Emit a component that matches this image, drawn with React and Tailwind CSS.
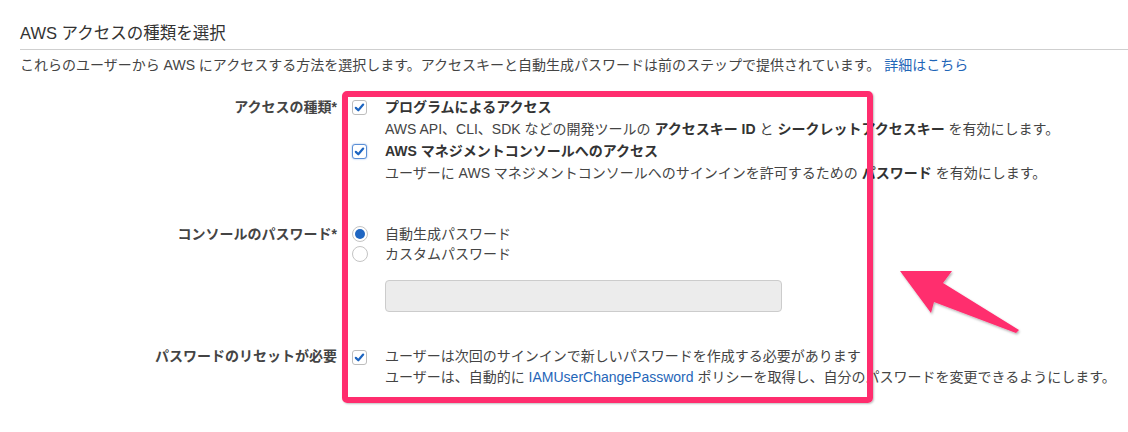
import React from 'react';

// ── Small form controls ──────────────────────────────
const Checkbox = ({ focused = false }) => (
  <span
    className={`mt-[4px] w-[15px] h-[15px] flex items-center justify-center rounded-[3px] bg-white border
                ${focused ? 'border-[#5b8fd6] shadow-[0_0_2px_#8fb4e8]' : 'border-[#bdbdbd]'}`}
  >
    <svg viewBox="0 0 12 12" className="w-[11px] h-[11px]">
      <path d="M2 6.4 L4.7 9 L10 2.8" fill="none" stroke="#1c64c0" strokeWidth="2.4" strokeLinecap="round" strokeLinejoin="round" />
    </svg>
  </span>
);

const Radio = ({ checked = false }) => (
  <span className="mt-[2px] w-[16px] h-[16px] rounded-full border border-[#c4c4c4] bg-white flex items-center justify-center">
    {checked && <span className="w-[10px] h-[10px] rounded-full bg-[#1f66c2]" />}
  </span>
);

const Label = ({ children }) => (
  <div className="w-[338px] shrink-0 text-right font-bold text-[#444] pr-[1px]">{children}</div>
);

export default function App() {
  return (
    <div className="relative w-[1128px] h-[432px] bg-white overflow-hidden text-[14px] text-[#444]
                    font-['Liberation_Sans','Noto_Sans_CJK_JP',sans-serif]">

      {/* ── Heading ─────────────────────────────────── */}
      <div className="pl-[20px] pt-[21px]">
        <h2 className="h-[24px] leading-[24px] text-[16.5px] text-[#333]">AWS アクセスの種類を選択</h2>
        <div className="mt-[4px] border-t border-[#cfcfcf]" />
        <p className="mt-[5px] leading-[20px]">
          これらのユーザーから AWS にアクセスする方法を選択します。アクセスキーと自動生成パスワードは前のステップで提供されています。
          <span className="ml-[4px] text-[#1f66b8]">詳細はこちら</span>
        </p>
      </div>

      {/* ── Access type ─────────────────────────────── */}
      <div className="mt-[21px] flex leading-[22px]">
        <Label>アクセスの種類*</Label>
        <div className="ml-[14px] flex flex-col">
          <div className="flex">
            <Checkbox />
            <div className="ml-[18px]">
              <div className="font-bold text-[#333]">プログラムによるアクセス</div>
              <div>
                AWS API、CLI、SDK などの開発ツールの <b className="text-[#333]">アクセスキー ID</b> と{' '}
                <b className="text-[#333]">シークレットアクセスキー</b> を有効にします。
              </div>
            </div>
          </div>
          <div className="flex">
            <Checkbox focused />
            <div className="ml-[18px]">
              <div className="font-bold text-[#333]">AWS マネジメントコンソールへのアクセス</div>
              <div>
                ユーザーに AWS マネジメントコンソールへのサインインを許可するための{' '}
                <b className="text-[#333]">パスワード</b> を有効にします。
              </div>
            </div>
          </div>
        </div>
      </div>

      {/* ── Console password ────────────────────────── */}
      <div className="mt-[40px] flex leading-[20px]">
        <Label>コンソールのパスワード*</Label>
        <div className="ml-[14px] flex flex-col">
          <div className="flex">
            <Radio checked />
            <span className="ml-[17px]">自動生成パスワード</span>
          </div>
          <div className="flex">
            <Radio />
            <span className="ml-[17px]">カスタムパスワード</span>
          </div>
          <div className="mt-[16px] ml-[33px] w-[397px] h-[32px] rounded-[4px] bg-[#ececec] border border-[#cccccc]" />
        </div>
      </div>

      {/* ── Password reset ──────────────────────────── */}
      <div className="mt-[34px] flex leading-[21px]">
        <Label>パスワードのリセットが必要</Label>
        <div className="ml-[14px] flex">
          <Checkbox />
          <div className="ml-[18px]">
            <div>ユーザーは次回のサインインで新しいパスワードを作成する必要があります</div>
            <div>
              ユーザーは、自動的に <span className="text-[#1f66b8]">IAMUserChangePassword</span> ポリシーを取得し、自分のパスワードを変更できるようにします。
            </div>
          </div>
        </div>
      </div>

      {/* ── Annotation: highlight box ───────────────── */}
      <div className="absolute left-[342px] top-[91px] w-[531px] h-[312px] border-[6px] border-[#ff2d6e] rounded-[5px]
                      shadow-[1px_1px_2px_rgba(0,0,0,0.25)]" />

      {/* ── Annotation: arrow ───────────────────────── */}
      <svg className="absolute left-0 top-0 pointer-events-none" width="1128" height="432">
        <defs>
          <filter id="sh" x="-20%" y="-20%" width="140%" height="140%">
            <feDropShadow dx="1" dy="1.5" stdDeviation="1" floodColor="#000" floodOpacity="0.3" />
          </filter>
        </defs>
        <polygon
          points="900,271 952,271 943,283 1019,330 1016,333 934,302 931,313"
          fill="#ff2d6e"
          filter="url(#sh)"
        />
      </svg>
    </div>
  );
}
